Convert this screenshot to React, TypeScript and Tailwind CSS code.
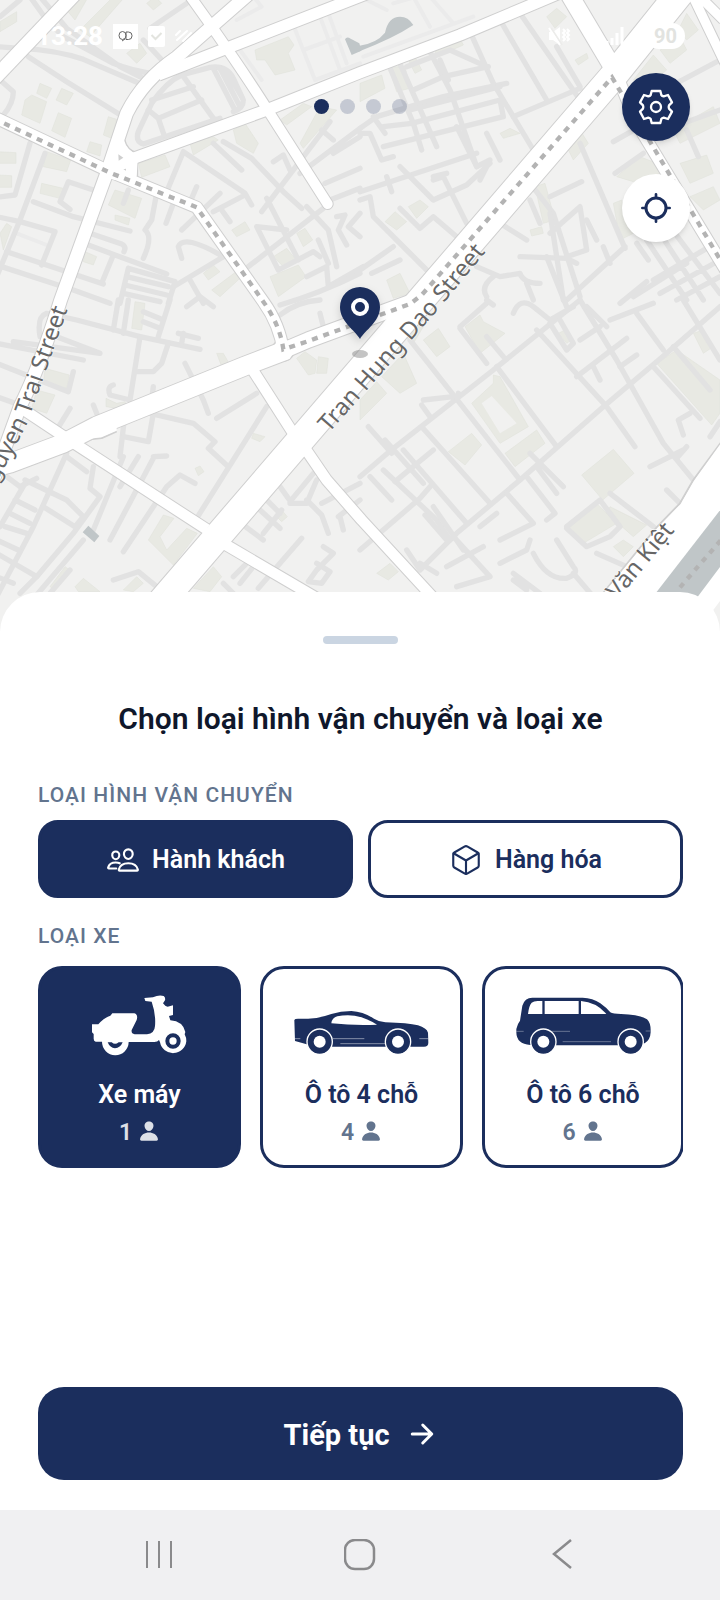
import { useState } from "react"
import type { ReactNode } from "react"
import clsx from "clsx"
import {
  IoArrowForward,
  IoCubeOutline,
  IoPeopleOutline,
  IoPerson,
} from "react-icons/io5"

const lanes = [
  // north west
  "M-10 140 L60 145 Q170 150 250 178 L430 255 M90 -10 L140 60 L190 110 L340 190 Q400 215 470 222 M120 -10 L200 85 L360 200 L440 240",
  "M85 170 L200 245 L370 350 M0 240 L40 275 Q40 310 10 345 M0 50 L60 0 M430 120 L490 185 M450 85 L560 10",
  "M90 430 L45 585 L-10 592 M135 460 L60 660 L-10 830 M-10 650 L60 665 L165 695 L125 795 M280 570 L205 545 L180 605 L210 628",
  "M100 605 L220 650 L390 693 M270 700 L365 732 Q380 740 372 755 M265 735 L345 765 L500 822 M340 765 L305 850 M20 755 L310 852 M-10 795 L220 870 L330 910",
  "M385 570 L370 610 M385 805 L360 910 M385 805 L525 845 L505 910 M380 830 L505 860 M375 855 L500 885 M370 880 L480 905",
  "M540 215 L640 355 L660 365 M660 355 L430 432 Q405 425 415 395 L455 310 Q500 245 545 225 L630 202 Q680 195 700 235 L730 300 Q730 325 700 335",
  "M475 355 L605 300 M455 300 L580 260 M445 330 L475 355 L492 405 M640 205 L705 330 M660 205 L720 320 M680 215 L725 290",
  "M550 455 L500 575 M550 455 L735 580 L755 615 M470 580 L455 660 L435 690 Q460 710 430 775 M590 560 L575 595 M520 610 L498 670 M660 580 L545 690 M735 585 L640 635 M665 630 L690 665",
  "M640 430 L725 510 M670 425 L755 475 L850 575 L905 625 M990 365 L785 635 M800 595 L895 780 M860 690 L770 680 L835 810 L940 755 L960 770 M670 770 Q550 700 535 740 L545 775 M745 800 L970 625 M990 600 L1080 565",
  "M820 485 L850 465 L870 510 M965 390 L1000 420 M920 620 L985 690 L1010 800 M955 720 L985 790 M975 550 L1080 505 M520 860 L670 770 M570 840 L610 910 M920 830 L980 800 L985 860 L1090 800",
  "M1010 650 L1035 645 L1015 690 L1040 735 M1080 640 L1045 680 L1080 710 M1000 460 L1080 410 M900 520 L1080 385 M840 915 Q960 880 1080 820",
  // north east
  "M1080 385 L1130 350 L1330 290 L1520 250 M1080 575 L1430 460 M1160 180 L1240 370 L1265 450 M1195 180 L1310 440 M1290 155 L1350 270 L1430 500 M1410 95 L1480 250 L1540 350 L1600 450",
  "M1500 60 L1640 300 M1560 40 L1740 300 M1670 140 L1740 260 M1540 350 L1740 265 M1220 200 L1350 150 L1460 200 M1240 270 L1330 230 L1465 200 M1320 180 L1345 240",
  "M1150 380 L1235 370 L1500 300 L1510 350 L1270 410 L1150 440 M1230 330 L1500 260 M1080 400 L1110 400 L1145 480 L1180 470 M1120 350 L1155 400",
  "M1370 380 L1430 500 L1470 480 L1440 540 M1460 400 L1500 480 M1200 500 L1300 600 L1400 555 L1470 490 M1300 540 L1330 530 L1400 670 M1300 530 L1340 520",
  "M1160 530 L1175 575 M1080 600 L1110 590 L1120 650 L1220 750 L1280 810 M1200 625 L1260 685 L1300 650 L1370 710 M1080 810 L1180 740 M1115 820 L1200 780",
  "M1590 550 L1660 640 L1740 890 M1650 590 L1745 545 M1590 600 L1620 670 M1650 700 L1740 620 L1760 750 L1700 770 M1560 770 L1700 775 L1730 790",
  "M1760 660 L1790 720 M1740 430 L1875 745 M1875 740 L1700 900 M1500 670 L1580 720 M1840 425 L1920 380 M1845 520 L1930 460 M2000 265 L2160 180 M2020 380 L2160 330 M2060 390 L2095 470",
  "M1650 640 L1690 900 M1810 740 L1830 790 M1910 730 L1945 780 M1940 720 L2060 900 M1980 700 L2110 900 M2010 680 L2160 880 M1960 840 L2120 745 M1980 880 L2160 780 M1900 890 L2060 790 M2030 900 L2160 830",
  "M1430 800 L1500 830 L1560 820 Q1570 850 1620 850 M1480 830 Q1440 860 1460 890 M1580 850 L1600 900 M1640 770 L1700 920 M1860 910 L1940 845",
  // south west
  "M-10 1030 L250 1080 M40 1025 L300 1060 L170 1010 M120 1010 Q110 950 140 940 L230 960 L420 1010 L600 1048 M355 900 L340 990 M385 900 L370 1000 M510 900 L475 1010 M430 935 L490 960 M430 965 L480 985",
  "M420 1010 L390 1200 L330 1185 Q320 1160 340 1155 M505 1030 L485 1090 L460 1115 L415 1115 M-10 1090 L205 1175 L220 1115 M-10 1190 L60 1215 M210 1225 L170 1290 M280 1215 L300 1265",
  "M535 1000 L595 1015 M550 1000 L545 1030 M555 1090 L610 1200 L625 1240 M800 1220 L590 1555 M650 1255 L770 1180 M460 1160 L450 1240 L580 1270 L645 1325 L625 1345 L685 1400 M375 1240 L360 1370",
  "M370 1310 L445 1325 L460 1240 M200 1360 L100 1580 L-10 1790 M200 1370 L260 1415 M280 1400 L270 1465 L300 1490 L220 1600 L110 1730 M75 1440 L200 1500 L250 1550 L225 1580 L130 1520 M20 1430 L60 1460 L110 1435",
  "M75 1450 L0 1580 M45 1500 L105 1530 M30 1540 L90 1570 M15 1580 L80 1600 M-10 1620 L55 1650 M-10 1660 L110 1730 L60 1780 M-10 1730 L40 1750 M370 1370 L280 1590 M415 1370 L360 1460 M250 1620 L80 1820",
  "M460 1375 L330 1620 M500 1368 L460 1370 M585 1450 L540 1425 L500 1460 L370 1655 M340 1740 L415 1715 L470 1760 M210 1710 L150 1780",
  "M840 1460 L865 1495 M800 1500 L840 1540 M790 1600 L845 1530 M730 1575 L790 1620 M780 1530 L840 1585 M940 1420 L870 1505 M920 1500 L965 1545 L985 1600 M870 1510 L920 1510 L950 1440 M905 1615 L775 1765",
  "M970 1640 L1000 1660 L950 1710 L925 1745 L965 1750 L990 1715 L950 1690 M1080 1450 L965 1510 M1015 1550 L1080 1500 M1030 1590 L1020 1550 M740 1690 L700 1730 M760 1700 L720 1750 M670 1750 L700 1780",
  "M840 945 Q890 905 960 900 M960 940 L970 980 M560 920 L600 890 L640 920",
  // south east
  "M1080 1430 L1180 1345 L1480 1110 L1740 900 M1230 1020 L1380 1210 L1560 1440 M1155 1320 L1270 1450 M1105 1280 L1175 1360 M1265 1280 L1470 1510 M1210 1350 L1400 1570 M1360 1190 L1270 1200 M1265 1215 L1290 1250",
  "M1490 1100 L1670 1340 M1370 1200 L1375 1180 M1380 980 L1460 910 M1380 985 L1460 1090 M1460 1010 L1510 1070 M1150 1410 L1310 1560 L1350 1620 M1080 1650 L1260 1495 L1290 1460",
  "M1560 1440 L1810 1220 L2000 1060 L2160 920 M1560 1440 L1370 1600 L1260 1710 L1220 1650 M1610 990 L1820 1220 L1905 1340 M1740 900 L1850 1080 L1990 1330 L2080 1440",
  "M1730 1130 L1880 1015 M1740 1020 L1800 980 M1820 980 L1760 920 M1860 1100 L1910 1065 M1830 960 L1960 910 M1780 1100 L1800 1140 M1910 940 L1990 1050 M1960 1100 L2100 1255 M2020 1040 L2130 1170 M2050 900 L2160 1080",
  "M2050 1350 L1950 1400 M2060 1340 L2030 1375 M2070 1240 L2035 1260 L2050 1305 M2130 1310 L2160 1265 M2000 1470 L2040 1510 M1300 1350 L1185 1445 M1110 1430 L1175 1500",
  "M1610 1400 L1670 1480 M1590 1360 L1690 1460 M1580 1430 L1665 1540 L1640 1560 M1440 1580 L1490 1540",
  "M1275 1545 L1340 1620 M1300 1520 L1390 1650 M1520 1480 L1600 1570 L1500 1620 M1500 1690 L1580 1650 L1590 1620 M1360 1610 L1470 1730 L1370 1760 M1450 1640 L1340 1700 M1260 1690 L1310 1720",
  "M1600 1660 Q1640 1740 1700 1735 Q1740 1720 1720 1700 L1670 1620 M1720 1720 L1780 1790 M1540 1720 L1620 1780 M1540 1740 L1580 1770 M1700 1580 L1800 1500 L1860 1580 L1830 1610 L1760 1640 L1700 1585 M1830 1480 L1960 1580 M1790 1660 L1880 1700",
  "M1540 940 Q1560 890 1600 920 L1650 960 L1720 920 M1650 970 L1700 1050 L1720 1030 L1680 960 M1460 900 L1480 915",
]

const buildings = [
  "M75 300 L95 285 L140 305 L120 370 L65 345Z M175 338 L215 355 L195 412 L155 392Z M270 425 L305 435 L300 468 L260 455Z M-10 455 L48 458 V490 H-10Z M-10 525 L35 527 V562 H-10Z M140 455 L212 480 L200 515 L130 500Z M125 550 L190 565 L180 595 L120 580Z",
  "M345 570 L425 595 L405 655 L325 615Z M415 490 L495 465 L510 500 L425 532Z M220 -10 L265 -10 L225 60 L200 30Z M340 -10 L375 -10 L270 110 L240 90Z M120 250 L155 265 L140 295 L110 280Z M185 265 L220 280 L200 315 L168 300Z",
  "M765 150 L865 110 L882 135 L865 160 L885 210 L825 225 L795 180 L770 180Z M700 390 L735 370 L775 430 L760 460 L710 430Z M695 690 L735 665 L750 690 L710 710Z M890 700 L915 685 L938 720 L910 740Z M820 770 L860 745 L885 775 L850 800Z",
  "M810 830 L895 795 L918 830 L835 890Z M610 820 L640 795 L660 815 L625 840Z M635 870 L715 810 L720 835 L660 890Z M570 430 L640 410 L655 420 L580 465Z M840 360 L910 310 L935 320 L860 375Z M900 430 L960 320 L1010 330 L910 445Z",
  "M325 350 L350 358 L335 415 L310 405Z M0 65 L50 35 V65 L0 95Z M380 160 L420 130 L440 160 L410 190Z M440 10 L465 -10 L485 10 L460 30Z M345 645 L390 655 L385 675 L345 660Z M255 755 L290 770 L280 795 L250 785Z M0 700 L20 670 L35 680 L10 750Z",
  "M1080 250 L1145 225 L1155 265 L1080 305Z M1165 200 L1215 200 L1230 265 L1190 275Z M1225 180 L1245 170 L1265 210 L1245 220Z M1640 50 L1670 25 L1700 50 L1665 85Z M1725 180 L1760 160 L1765 175 L1735 195Z M1300 140 L1380 115 L1390 135 L1310 170Z",
  "M1900 240 L1960 165 L2000 210 L1930 270Z M1980 150 L2040 110 L2060 150 L2010 190Z M2060 40 L2095 90 L2060 120 L2035 90Z M1500 400 L1530 385 L1560 400 L1510 415Z M1700 440 L1740 390 L1765 430 L1720 480Z M1850 530 L1920 470 L1970 490 L1980 520 L1900 545Z",
  "M1605 560 L1635 550 L1665 660 L1630 670Z M1155 665 L1185 635 L1220 665 L1190 690Z M1225 620 L1260 600 L1285 620 L1250 655Z M1160 840 L1200 820 L1230 880 L1180 895Z M2020 390 L2140 320 L2160 370 L2040 430Z M2040 490 L2120 465 L2140 520 L2070 550Z",
  "M1840 610 L1865 600 L1900 700 L1860 720Z M2070 590 L2140 560 L2160 600 L2110 630Z M1590 690 L1625 680 L1630 700 L1595 708Z",
  "M405 905 L435 910 L425 990 L395 985Z M135 1105 L208 1125 L200 1165 L130 1150Z M110 1170 L165 1185 L140 1240 L95 1225Z M890 1075 L915 1055 L950 1080 L945 1120 L925 1125Z M955 1070 L985 1075 L980 1120 L950 1120Z M650 1060 L670 1060 L690 1095 L665 1100Z",
  "M445 1620 L490 1545 L522 1555 L480 1610 L500 1650 L560 1585 L592 1600 L520 1695Z M225 1760 L250 1735 L300 1775 H235Z M370 1770 L410 1730 L430 1750 L400 1775Z M580 1765 L640 1700 L665 1730 L630 1775Z M825 1545 L845 1530 L862 1550 L845 1565Z",
  "M585 1405 L600 1398 L612 1415 L595 1427Z M318 1195 L350 1210 L375 1205 L385 1230 L318 1220Z M760 1300 L795 1310 L780 1325 L755 1315Z M150 1760 L195 1700 L210 1710 L165 1770Z",
  "M1180 980 L1230 940 L1270 980 L1240 1030Z M1270 1020 L1315 985 L1350 1040 L1310 1070Z M1145 1130 L1210 1060 L1250 1150 L1200 1180Z M1080 1200 L1130 1145 L1160 1180 L1080 1260Z M1395 980 L1440 945 L1450 965 L1515 1000 L1440 1060Z",
  "M1415 1210 L1480 1150 L1480 1125 L1500 1130 L1585 1280 L1500 1330Z M1515 1360 L1610 1290 L1635 1330 L1545 1400Z M1345 1355 L1415 1300 L1445 1335 L1395 1395Z M1745 1425 L1840 1348 L1902 1420 L1808 1500Z M1700 1590 L1790 1510 L1850 1570 L1750 1630Z",
  "M1830 1520 L1940 1575 L1900 1610 L1820 1540Z M1840 1640 L1870 1620 L1900 1640 L1870 1670Z M1970 1090 L2030 1050 L2160 1140 L2160 1240 L2135 1275Z M2080 1000 L2110 990 L2140 1040 L2110 1060Z M1130 1720 L1170 1690 L1195 1715 L1165 1740Z M1675 1000 L1695 990 L1715 1020 L1700 1030Z",
]

const roads = [
  { d: "M240 -35 L-20 238", width: 42 },
  { d: "M760 -30 L640 75 L530 172 Q430 240 380 340 L320 520 L182 900 Q120 1100 60 1220 L-20 1440", width: 38 },
  { d: "M550 -40 L632 75 Q740 230 800 325 L983 612", width: 30, round: true },
  { d: "M1180 -50 L680 145 L475 225", width: 34 },
  { d: "M370 486 L800 330 L1080 218 L1380 105 L1700 -30", width: 34 },
  { d: "M-20 350 L330 515 L590 622 L790 905 Q840 975 850 1055", width: 34 },
  { d: "M850 1052 L925 1020 L1230 908", width: 46 },
  { d: "M-20 1403 L30 1390 L190 1330 L290 1278 L735 1098 L860 1050", width: 56 },
  { d: "M755 1105 L880 1300 M915 1345 L980 1440 L1085 1560 L1320 1815", width: 32 },
  { d: "M60 1222 L215 1325 L620 1588 M670 1630 L960 1800", width: 32 },
  { d: "M1700 -30 L1840 205", width: 52 },
  { d: "M1840 200 L1910 370 L2180 815", width: 34 },
  { d: "M2060 -50 L2185 210 M2080 -30 L2170 60", width: 28 },
  { d: "M480 1810 L1835 234 L2055 -40", width: 82 },
]

const transitLine =
  "M-20 355 L330 518 L590 622 L790 905 Q840 975 850 1048 L920 1025 L1230 912 L1265 885 L1836 232 L1965 450 L2180 812"

function StreetMap() {
  return (
    <svg
      viewBox="0 0 2160 1896"
      preserveAspectRatio="xMidYMin slice"
      className="absolute inset-0 size-full bg-[#f1f1f0]"
      aria-hidden="true"
    >
      <g fill="#e8e9e3" stroke="#dfe0d8" strokeWidth="1.500">
        {buildings.map(d => (
          <path d={d} key={d} />
        ))}
      </g>
      <path d="M1445 1210 L1475 1188 L1550 1270 L1500 1300Z" fill="#f1f1f0" />
      <g
        fill="none"
        stroke="#ebebeb"
        strokeWidth="12"
        strokeLinecap="round"
        strokeLinejoin="round"
      >
        <path d="M710 60 L785 20 L760 -10 M720 150 L785 240 M880 75 L945 240 L1080 190 M910 150 L1020 110 M960 50 L1020 210 M985 40 L1040 190 M50 700 L140 735 M1100 0 L1160 30 M1240 -10 L1290 80 M1290 -10 L1360 70 M1180 10 L1320 -30 M1090 170 L1420 50" />
      </g>
      <g
        fill="none"
        stroke="#e2e2e2"
        strokeWidth="16"
        strokeLinecap="round"
        strokeLinejoin="round"
      >
        {lanes.map(d => (
          <path d={d} key={d} />
        ))}
      </g>

      <g fill="#c0c6c8">
        <path d="M1035 118 Q1040 108 1052 116 L1078 130 L1084 152 L1055 165Z" />
        <path d="M1075 138 Q1130 130 1155 98 Q1165 50 1200 50 Q1225 50 1240 75 Q1180 115 1075 155Z" />
        <path d="M265 1577 L298 1608 L283 1627 L248 1597Z" />
      </g>

      <g fill="none" stroke="#cfcfcf" strokeLinejoin="round">
        {roads.map(road => (
          <path
            d={road.d}
            key={road.d}
            strokeWidth={road.width + 6}
            strokeLinecap={road.round ? "round" : "butt"}
          />
        ))}
        <circle cx="850" cy="1050" r="33" strokeWidth="4" />
        <path d="M374 420 Q380 450 412 460 M412 488 V532" strokeWidth="5" />
        <path d="M235 1290 L262 1272 L285 1256 L330 1238 M230 1326 L270 1318 L305 1314 L350 1294" strokeWidth="6" />
        <path
          d="M2170 1318 L2080 1440 L2040 1510 L1970 1582 L1760 1840"
          strokeWidth="6"
        />
      </g>
      <g fill="none" stroke="#ffffff" strokeLinejoin="round">
        {roads.map(road => (
          <path
            d={road.d}
            key={road.d}
            strokeWidth={road.width}
            strokeLinecap={road.round ? "round" : "butt"}
          />
        ))}
      </g>
      <path
        d="M372 420 Q380 452 414 464 L410 530 L345 540 L310 530 L345 440Z"
        fill="#ffffff"
      />
      <path d="M230 1324 L235 1292 L262 1274 L285 1258 L350 1234 V1292 L305 1312 L270 1316Z" fill="#ffffff" />
      <circle cx="850" cy="1050" r="31" fill="#ffffff" />
      <path
        d="M2170 1320 L2082 1442 L2042 1512 L1972 1584 L1762 1840 L2110 1870 L2170 1790Z"
        fill="#ffffff"
      />
      <path d="M2170 1518 L1968 1778 L2092 1792 L2170 1688Z" fill="#c0c6c8" />
      <path d="M355 463 L370 473 L356 482Z M370 508 L378 506 L378 512Z" fill="#cfcfcf" />

      <g fill="none" stroke="#b3b3b3" strokeWidth="13">
        <path d={transitLine} strokeDasharray="18 18" />
        <path d="M2040 1762 L2170 1612" strokeDasharray="16 18" />
      </g>

      <g
        className="font-['Noto_Sans',sans-serif]"
        fontSize="71"
        fill="#666666"
        stroke="#ffffff"
        strokeWidth="3"
        strokeLinejoin="round"
        paintOrder="stroke"
      >
        <path id="nguyen-trai" d="M-160 1680 L5 1420 L80 1275 L125 1150 L203 928" fill="none" stroke="none" />
        <path id="tran-hung-dao" d="M986 1300 L1305 940 L1600 584" fill="none" stroke="none" />
        <path id="vo-van-kiet" d="M1700 1985 L2025 1592" fill="none" stroke="none" />
        <text textAnchor="end">
          <textPath href="#nguyen-trai" startOffset="100%">
            Nguyen Trai Street
          </textPath>
        </text>
        <text>
          <textPath href="#tran-hung-dao">Tran Hung Dao Street</textPath>
        </text>
        <text textAnchor="end">
          <textPath href="#vo-van-kiet" startOffset="100%">
            Võ Văn Kiệt
          </textPath>
        </text>
      </g>
    </svg>
  )
}

function MapPin() {
  return (
    <svg
      viewBox="0 0 60 80"
      className="absolute top-[280px] left-1/2 h-20 w-[60px] -translate-x-1/2"
      role="img"
      aria-label="Vị trí đón"
    >
      <ellipse cx="30" cy="74" rx="8" ry="4" fill="#8a8a8a" fillOpacity="0.5" />
      <path
        d="M30 59 C25 50 10 42 10 27 A20 20 0 0 1 50 27 C50 42 35 50 30 59Z"
        fill="#1b2e5d"
        className="drop-shadow-lg"
      />
      <circle cx="30" cy="27" r="7" fill="none" stroke="#ffffff" strokeWidth="4" />
    </svg>
  )
}

function StatusBar() {
  return (
    <div className="relative flex h-[72px] items-center justify-between pr-[35px] pl-9 text-white">
      <div className="flex items-center gap-[10px]">
        <span className="text-[26px] leading-8 font-bold">13:28</span>
        <svg viewBox="0 0 25 25" className="size-[25px]" aria-hidden="true">
          <path d="M0 0H25V25H0Z" fill="#ffffff" />
          <path
            d="M9.500 7.500a3.500 4 0 1 0 0 8a3.500 4 0 1 0 0-8M13 8V15.500H15.500a3.500 3.700 0 0 0 0-7.500H13M9 17l3-2"
            fill="none"
            stroke="#666666"
            strokeWidth="1"
          />
        </svg>
        <svg viewBox="0 0 17 21" className="h-[21px] w-[17px]" aria-hidden="true">
          <rect width="17" height="21" rx="2" fill="#ffffff" />
          <path d="M3.500 9l4 4 6-6" fill="none" stroke="#e3e4df" strokeWidth="2" />
        </svg>
        <svg viewBox="0 0 18 14" className="h-[14px] w-[18px]" aria-hidden="true">
          <path
            d="M1 6l4-4M2 11l10-9M8 12l8-8"
            fill="none"
            stroke="#ffffff"
            strokeWidth="2"
            strokeLinecap="round"
          />
        </svg>
      </div>
      <div className="flex items-center gap-[22px]">
        <svg viewBox="0 0 76 20" className="h-5 w-[76px]" aria-hidden="true">
          <path d="M1 6h4l7-5v18l-7-5H1z" fill="#ffffff" />
          <path
            d="M15 3l2 2-2 2 2 2-2 2 2 2-2 2M19 3l2 2-2 2 2 2-2 2 2 2-2 2"
            fill="none"
            stroke="#ffffff"
            strokeWidth="2"
          />
          <path d="M3 2l11 17" fill="none" stroke="#ececea" strokeWidth="2" />
          <path d="M1 2l11 17" fill="none" stroke="#ffffff" strokeWidth="2" />
          <path
            d="M59 19v-4M64 19v-7M69 19V7M74 19V1"
            fill="none"
            stroke="#ffffff"
            strokeWidth="3"
          />
        </svg>
        <span className="flex h-[26px] items-center rounded-full bg-white px-2 text-xl font-bold text-[#e2e3e0]">
          90
        </span>
      </div>
    </div>
  )
}

function ScooterIcon() {
  return (
    <svg viewBox="125 100 405 186" className="h-[62px] w-[135px]" aria-hidden="true">
      <path
        d="M342 112 L368 110 Q385 102 400 106 Q406 110 404 119 L398 128 Q404 137 412 138 L428 134 V163 L416 166 L420 179 Q458 182 465 214 L463 221 Q468 230 468 242 A40 40 0 0 1 389 245 L386 238 Q382 244 372 244 H295 A40 40 0 0 1 215 243 L196 243 Q190 241 190 234 V220 L185 215 V191 L204 191 Q220 172 240 165 L246 158 H312 Q324 162 319 178 L304 208 Q302 219 313 221 H350 Q373 218 374 196 Q377 160 364 123 L345 121Z"
        fill="#ffffff"
      />
      <path
        d="M232 245 H244 Q254 254 265 245 H277 Q270 262 254 263 Q239 262 232 245Z"
        fill="#1b2e5d"
      />
      <circle cx="428" cy="241" r="17" fill="none" stroke="#1b2e5d" strokeWidth="12" />
    </svg>
  )
}

function SedanIcon() {
  return (
    <svg viewBox="128 100 405 186" className="h-[62px] w-[135px]" aria-hidden="true">
      <path
        d="M129 178 Q130 174 140 174 H170 Q205 173 240 160 Q268 151 300 151 Q336 153 368 174 Q384 184 402 185 Q470 187 500 194 Q526 202 530 216 L531 246 Q531 258 518 258 H400 H245 L166 251 L131 241Z"
        fill="#1b2e5d"
      />
      <path
        d="M240 188 Q242 171 258 167 Q282 162 310 165 Q342 170 377 192 Q310 195 240 188Z"
        fill="#ffffff"
      />
      <path
        d="M129 234H147M245 234H339M267 249H402M504 234H531"
        stroke="#ffffff"
        strokeWidth="2"
        strokeOpacity="0.7"
      />
      <g fill="#1b2e5d" stroke="#ffffff" strokeWidth="4">
        <circle cx="205" cy="243" r="38" />
        <circle cx="440" cy="243" r="38" />
      </g>
      <g fill="#ffffff">
        <circle cx="205" cy="243" r="18" />
        <circle cx="440" cy="243" r="18" />
      </g>
    </svg>
  )
}

function SuvIcon() {
  return (
    <svg viewBox="135 100 405 186" className="h-[62px] w-[135px]" aria-hidden="true">
      <path
        d="M136 205 Q140 188 147 180 L154 135 Q161 111 184 111 H335 Q365 112 388 128 Q405 140 418 155 Q426 160 450 160 Q508 162 528 176 Q540 187 539 214 Q538 238 521 248 L440 254 H258 L178 253 Q136 250 136 215Z"
        fill="#1b2e5d"
      />
      <path
        d="M171 160 Q174 134 182 126 Q188 121 200 121 H214 V160Z M221 121 H323 V160 H221Z M330 121 Q374 124 406 159 Q400 161 330 160Z"
        fill="#ffffff"
      />
      <path
        d="M136 212H158M240 212H297M275 243H420M524 211H539"
        stroke="#ffffff"
        strokeWidth="2"
        strokeOpacity="0.5"
      />
      <g fill="#1b2e5d" stroke="#ffffff" strokeWidth="4">
        <circle cx="217" cy="243" r="38" />
        <circle cx="479" cy="243" r="38" />
      </g>
      <g fill="#ffffff">
        <circle cx="217" cy="243" r="18" />
        <circle cx="479" cy="243" r="18" />
      </g>
    </svg>
  )
}

const services = [
  { id: "passenger", name: "Hành khách", icon: IoPeopleOutline },
  { id: "cargo", name: "Hàng hóa", icon: IoCubeOutline },
]

const vehicles = [
  { id: "scooter", name: "Xe máy", seats: 1, icon: ScooterIcon },
  { id: "sedan", name: "Ô tô 4 chỗ", seats: 4, icon: SedanIcon },
  { id: "suv", name: "Ô tô 6 chỗ", seats: 6, icon: SuvIcon },
]

function SectionLabel({ children }: { children: ReactNode }) {
  return (
    <h2 className="text-[21px] leading-7 font-medium tracking-wider text-slate-500 uppercase">
      {children}
    </h2>
  )
}

export default function App() {
  const [service, setService] = useState("passenger")
  const [vehicle, setVehicle] = useState("scooter")

  return (
    <div className="flex min-h-screen flex-col bg-white font-[Roboto,sans-serif]">
      <header className="relative h-[632px] overflow-hidden">
        <StreetMap />
        <StatusBar />
        <MapPin />

        <div className="absolute inset-x-0 top-[99px] flex justify-center gap-[11px]">
          <span className="size-[15px] rounded-full bg-[#1b2e5d]" />
          <span className="size-[15px] rounded-full bg-[#1b2e5d]/20" />
          <span className="size-[15px] rounded-full bg-[#1b2e5d]/20" />
          <span className="size-[15px] rounded-full bg-[#1b2e5d]/20" />
        </div>

        <div className="absolute top-[73px] right-[30px] flex flex-col gap-[33px]">
          <button
            type="button"
            aria-label="Cài đặt"
            className="flex size-[68px] items-center justify-center rounded-full bg-[#1b2e5d] shadow-md"
          >
            <svg viewBox="-54 -54 108 108" className="size-9" aria-hidden="true">
              <g fill="none" stroke="#ffffff" strokeWidth="7" strokeLinejoin="round">
                <path d="M-13 -48H13L16 -36Q18 -33 23 -32L36 -36L48 -14L39 -5Q37 0 39 5L48 14L36 36L23 32Q18 33 16 36L13 48H-13L-16 36Q-18 33 -23 32L-36 36L-48 14L-39 5Q-37 0 -39 -5L-48 -14L-36 -36L-23 -32Q-18 -33 -16 -36Z" />
                <circle r="15" />
              </g>
            </svg>
          </button>
          <button
            type="button"
            aria-label="Vị trí của tôi"
            className="flex size-[68px] items-center justify-center rounded-full bg-white shadow-md"
          >
            <svg viewBox="-48 -48 96 96" className="size-8" aria-hidden="true">
              <g fill="none" stroke="#1b2e5d" strokeLinecap="round">
                <circle r="30" strokeWidth="9" />
                <path d="M0 -41V-32M0 41V32M-41 0H-32M41 0H32" strokeWidth="8" />
              </g>
            </svg>
          </button>
        </div>
      </header>

      <main className="relative -mt-10 flex flex-1 flex-col rounded-t-[40px] bg-white pt-11 pr-[37px] pb-[30px] pl-[38px]">
        <div className="mx-auto h-2 w-[75px] rounded-full bg-slate-300" />

        <h1 className="mt-[55px] text-center text-[30px] leading-10 font-semibold text-slate-900">
          Chọn loại hình vận chuyển và loại xe
        </h1>

        <div className="mt-[42px]">
          <SectionLabel>Loại hình vận chuyển</SectionLabel>
          <div className="mt-[11px] grid grid-cols-2 gap-[15px]">
            {services.map(({ id, name, icon: Icon }) => (
              <button
                type="button"
                key={id}
                aria-pressed={service === id}
                onClick={() => setService(id)}
                className={clsx(
                  "flex h-[78px] items-center justify-center gap-3 rounded-[20px] border-3 border-[#1b2e5d] pt-[2px] text-[25px] font-semibold",
                  service === id ? "bg-[#1b2e5d] text-white" : "bg-white text-[#1b2e5d]"
                )}
              >
                <Icon className="size-[34px]" />
                {name}
              </button>
            ))}
          </div>
        </div>

        <div className="mt-6">
          <SectionLabel>Loại xe</SectionLabel>
          <div className="mt-4 flex gap-[19px] overflow-hidden">
            {vehicles.map(({ id, name, seats, icon: Icon }) => (
              <button
                type="button"
                key={id}
                aria-pressed={vehicle === id}
                onClick={() => setVehicle(id)}
                className={clsx(
                  "flex h-[202px] w-[203px] shrink-0 flex-col items-center rounded-3xl border-3 border-[#1b2e5d] pt-[25px] last:w-[202px]",
                  vehicle === id ? "bg-[#1b2e5d] text-white" : "bg-white text-[#1b2e5d]"
                )}
              >
                <Icon />
                <span className="mt-[23px] text-[25px] leading-8 font-semibold">{name}</span>
                <span
                  className={clsx(
                    "mt-2 flex items-center gap-[6px] text-[23px] leading-7 font-semibold",
                    vehicle === id ? "text-white/85" : "text-slate-500"
                  )}
                >
                  {seats}
                  <IoPerson className="-mt-1 size-[22px]" />
                </span>
              </button>
            ))}
          </div>
        </div>

        <button
          type="button"
          className="mt-auto flex h-[93px] items-center justify-center gap-4 rounded-[26px] bg-[#1b2e5d] pt-1 text-[29px] font-bold text-white"
        >
          Tiếp tục
          <IoArrowForward className="-mt-1 size-8" />
        </button>
      </main>

      <nav
        aria-label="Điều hướng hệ thống"
        className="flex h-[90px] items-center justify-around bg-[#f0f0f2] px-[58px] text-[#8a8a8c]"
      >
        <button type="button" aria-label="Gần đây">
          <svg viewBox="0 0 32 32" className="size-8" aria-hidden="true">
            <path d="M4 2V29M16 2V29M28 2V29" fill="none" stroke="currentColor" strokeWidth="2" />
          </svg>
        </button>
        <button type="button" aria-label="Màn hình chính">
          <svg viewBox="0 0 32 32" className="size-8" aria-hidden="true">
            <rect x="1" y="1" width="29" height="29" rx="10" fill="none" stroke="currentColor" strokeWidth="2.500" />
          </svg>
        </button>
        <button type="button" aria-label="Quay lại">
          <svg viewBox="0 0 32 32" className="size-8" aria-hidden="true">
            <path d="M26 1L9 15L26 29" fill="none" stroke="currentColor" strokeWidth="2.500" />
          </svg>
        </button>
      </nav>
    </div>
  )
}
